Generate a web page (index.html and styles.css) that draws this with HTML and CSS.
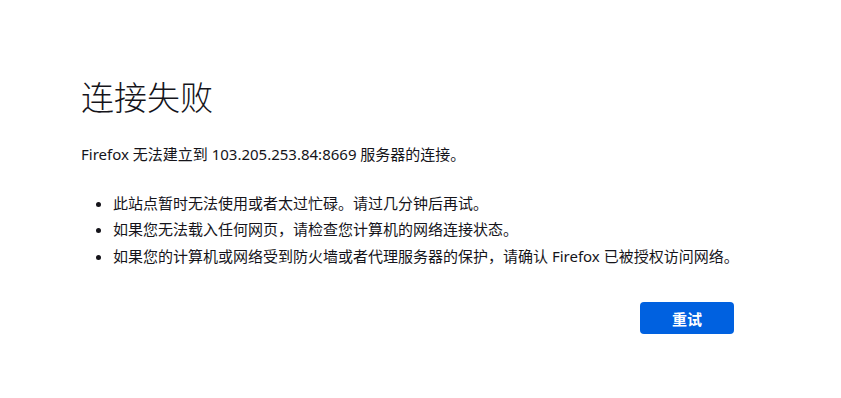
FILE: index.html
```html
<!DOCTYPE html>
<html lang="zh-CN">
<head>
<meta charset="utf-8">
<title>连接失败</title>
<link rel="stylesheet" href="styles.css">
</head>
<body>
<main class="container">
  <h1 class="title">连接失败</h1>
  <p class="intro">Firefox 无法建立到 103.205.253.84:8669 服务器的连接。</p>
  <ul class="tips">
    <li>此站点暂时无法使用或者太过忙碌。请过几分钟后再试。</li>
    <li>如果您无法载入任何网页，请检查您计算机的网络连接状态。</li>
    <li>如果您的计算机或网络受到防火墙或者代理服务器的保护，请确认 Firefox 已被授权访问网络。</li>
  </ul>
  <div class="actions">
    <button class="retry" type="button">重试</button>
  </div>
</main>
</body>
</html>
```

FILE: styles.css
```css
html, body {
  margin: 0;
  padding: 0;
  background: #ffffff;
}

body {
  font-family: "Noto Sans", "Noto Sans CJK SC", sans-serif;
  font-size: 15px;
  color: #15141a;
}

.container {
  width: 653px;
  padding: 76px 0 0 81px;
  box-sizing: content-box;
}

.title {
  margin: 0;
  font-size: 33px;
  line-height: 40px;
  font-weight: 300;
  font-family: "Noto Sans CJK SC", sans-serif;
}

.intro {
  margin: 27px 0 0;
  line-height: 22.5px;
}

.tips {
  margin: 26px 0 0;
  padding: 0 0 0 32px;
  list-style: disc;
  white-space: nowrap;
}

.tips li {
  line-height: 22.5px;
  margin-bottom: 4px;
}

.tips li:last-child {
  margin-bottom: 0;
}

.actions {
  display: flex;
  justify-content: flex-end;
  margin-top: 35px;
}

.retry {
  width: 94px;
  height: 32px;
  border: none;
  border-radius: 4px;
  background: #0061e0;
  color: #ffffff;
  font-family: "Noto Sans CJK SC", sans-serif;
  font-size: 15px;
  font-weight: 700;
  padding: 0;
  cursor: pointer;
}
```
